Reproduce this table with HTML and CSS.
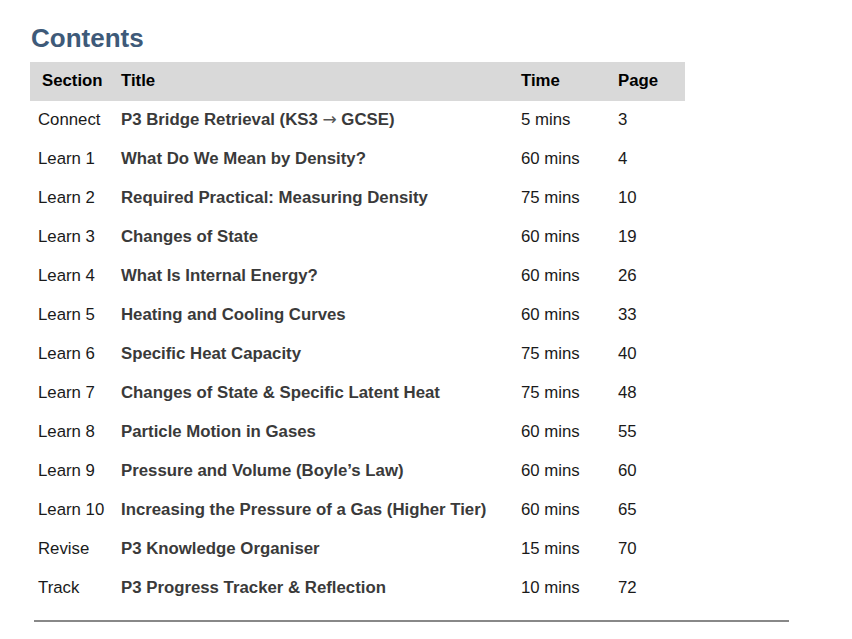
FILE: index.html
```html
<!DOCTYPE html>
<html>
<head>
<meta charset="utf-8">
<link rel="stylesheet" href="styles.css">
</head>
<body>
<div class="page">
  <h1 class="title">Contents</h1>
  <table class="toc">
    <colgroup>
      <col class="c-sec"><col class="c-title"><col class="c-time"><col class="c-page">
    </colgroup>
    <thead>
      <tr><th>Section</th><th>Title</th><th>Time</th><th>Page</th></tr>
    </thead>
    <tbody>
      <tr><td>Connect</td><td class="t">P3 Bridge Retrieval (KS3 <span class="arrow">→</span> GCSE)</td><td>5 mins</td><td>3</td></tr>
      <tr><td>Learn 1</td><td class="t">What Do We Mean by Density?</td><td>60 mins</td><td>4</td></tr>
      <tr><td>Learn 2</td><td class="t">Required Practical: Measuring Density</td><td>75 mins</td><td>10</td></tr>
      <tr><td>Learn 3</td><td class="t">Changes of State</td><td>60 mins</td><td>19</td></tr>
      <tr><td>Learn 4</td><td class="t">What Is Internal Energy?</td><td>60 mins</td><td>26</td></tr>
      <tr><td>Learn 5</td><td class="t">Heating and Cooling Curves</td><td>60 mins</td><td>33</td></tr>
      <tr><td>Learn 6</td><td class="t">Specific Heat Capacity</td><td>75 mins</td><td>40</td></tr>
      <tr><td>Learn 7</td><td class="t">Changes of State &amp; Specific Latent Heat</td><td>75 mins</td><td>48</td></tr>
      <tr><td>Learn 8</td><td class="t">Particle Motion in Gases</td><td>60 mins</td><td>55</td></tr>
      <tr><td>Learn 9</td><td class="t">Pressure and Volume (Boyle’s Law)</td><td>60 mins</td><td>60</td></tr>
      <tr><td>Learn 10</td><td class="t">Increasing the Pressure of a Gas (Higher Tier)</td><td>60 mins</td><td>65</td></tr>
      <tr><td>Revise</td><td class="t">P3 Knowledge Organiser</td><td>15 mins</td><td>70</td></tr>
      <tr><td>Track</td><td class="t">P3 Progress Tracker &amp; Reflection</td><td>10 mins</td><td>72</td></tr>
    </tbody>
  </table>
  <hr class="rule">
</div>
</body>
</html>
```
FILE: styles.css
```css
html, body {
  margin: 0;
  padding: 0;
  background: #ffffff;
}
body {
  font-family: "Liberation Sans", Arial, sans-serif;
  color: #111;
}
.page {
  padding: 22px 0 0 30px;
}
.title {
  margin: 0 0 8px 1px;
  font-size: 26px;
  line-height: 32px;
  font-weight: bold;
  color: #3e5a79;
}
.toc {
  border-collapse: collapse;
  width: 655px;
  table-layout: fixed;
  font-size: 16.8px;
}
.c-sec { width: 83px; }
.c-title { width: 400px; }
.c-time { width: 97px; }
.c-page { width: 75px; }
.toc th {
  background: #d9d9d9;
  text-align: left;
  font-weight: bold;
  color: #000;
  height: 37px;
  padding: 0 0 2px 8px;
}
.toc th:first-child { padding-left: 12px; }
.toc td {
  height: 37px;
  padding: 0 0 2px 8px;
  color: #1a1a1a;
  white-space: nowrap;
}
.toc td.t {
  font-weight: bold;
  color: #3a3a3a;
}
.arrow {
  font-family: "DejaVu Sans", sans-serif;
  font-weight: normal;
  font-size: 17px;
  color: #555;
}
.rule {
  margin: 12px 0 0 4px;
  width: 755px;
  height: 2px;
  border: 0;
  background: #888888;
}
```
